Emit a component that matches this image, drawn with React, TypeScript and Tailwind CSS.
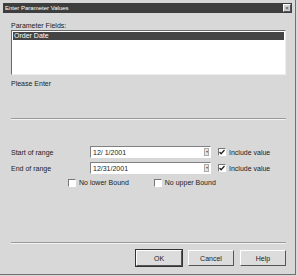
import React from "react";

const font = { fontFamily: '"Liberation Sans", Arial, sans-serif' };

const Check = ({ checked }: { checked?: boolean }) => (
  <span className="flex h-[8px] w-[8px] items-center justify-center border-t border-l border-t-[#777] border-l-[#777] border-b border-r border-b-white border-r-white bg-white">
    {checked && (
      <svg width="6" height="6" viewBox="0 0 6 6" fill="none" stroke="#222" strokeWidth="1.3">
        <path d="M0.5 3l1.6 1.7L5.5 1" />
      </svg>
    )}
  </span>
);

const DateField = ({ value }: { value: string }) => (
  <div className="flex h-[12px] w-[121px] items-center border-t border-l border-t-[#808080] border-l-[#808080] border-b border-r border-b-white border-r-white bg-white pl-[2px]">
    <span className="flex-1 text-[7px] leading-none text-[#222]">{value}</span>
    <span className="mr-[1px] flex h-[8px] w-[5px] items-center justify-center border border-[#aaa] bg-[#e4e4e4] text-[4px] leading-none text-[#555]">
      ▾
    </span>
  </div>
);

const Btn = ({ label, primary }: { label: string; primary?: boolean }) => (
  <button
    className={
      "flex h-[16px] w-[46px] items-center justify-center border border-t-white border-l-white border-b-[#555] border-r-[#555] bg-[#dcdcdc] text-[7px] leading-none text-[#222]" +
      (primary ? " outline outline-1 outline-[#333]" : "")
    }
  >
    {label}
  </button>
);

export default function App() {
  return (
    <div className="h-[276px] w-[298px] bg-[#d8d8d8]" style={font}>
      <div className="flex h-[275px] w-[296px] flex-col border-r border-b border-r-[#707070] border-b-[#707070] bg-[#d8d8d8]">
        <div className="mx-[3px] mt-[3px] flex h-[10px] items-center justify-between bg-[#3e3e3e] pl-[2px] pr-[1px]">
          <span className="text-[6px] leading-none text-white">Enter Parameter Values</span>
          <span className="flex h-[8px] w-[8px] items-center justify-center border border-t-white border-l-white border-b-[#555] border-r-[#555] bg-[#cfcfcf] text-[6px] leading-none text-[#333]">
            ×
          </span>
        </div>

        <div className="flex flex-1 flex-col pl-[11px] pr-[9px] text-[7px] leading-none text-[#222]">
          <div className="mt-[9px] h-[7px]">Parameter Fields:</div>
          <div className="mt-[1px] h-[45px] border-t border-l border-t-[#6a6a6a] border-l-[#6a6a6a] border-b border-r border-b-[#eee] border-r-[#eee] bg-white">
            <div className="mx-[1px] mt-[1px] h-[8px] bg-[#444] pl-[1px] text-[7px] leading-[8px] text-white">Order Date</div>
          </div>
          <div className="mt-[5px]">Please Enter</div>
          <div className="mt-[31px] h-[2px] border-t border-t-[#9a9a9a] border-b border-b-[#f2f2f2]" />

          <div className="mt-[26px] flex h-[12px] items-center">
            <span className="w-[79px]">Start of range</span>
            <DateField value="12/  1/2001" />
            <span className="ml-[7px] flex items-center gap-[3px]">
              <Check checked />
              Include value
            </span>
          </div>
          <div className="mt-[4px] flex h-[12px] items-center">
            <span className="w-[79px]">End of range</span>
            <DateField value="12/31/2001" />
            <span className="ml-[7px] flex items-center gap-[3px]">
              <Check checked />
              Include value
            </span>
          </div>
          <div className="mt-[4px] flex h-[9px] items-center">
            <span className="ml-[57px] flex items-center gap-[3px]">
              <Check />
              No lower Bound
            </span>
            <span className="ml-[25px] flex items-center gap-[3px]">
              <Check />
              No upper Bound
            </span>
          </div>

          <div className="mt-[55px] h-[2px] border-t border-t-[#9a9a9a] border-b border-b-[#f2f2f2]" />
          <div className="mt-[6px] flex justify-end gap-[6px]">
            <Btn label="OK" primary />
            <Btn label="Cancel" />
            <Btn label="Help" />
          </div>
        </div>
      </div>
    </div>
  );
}
